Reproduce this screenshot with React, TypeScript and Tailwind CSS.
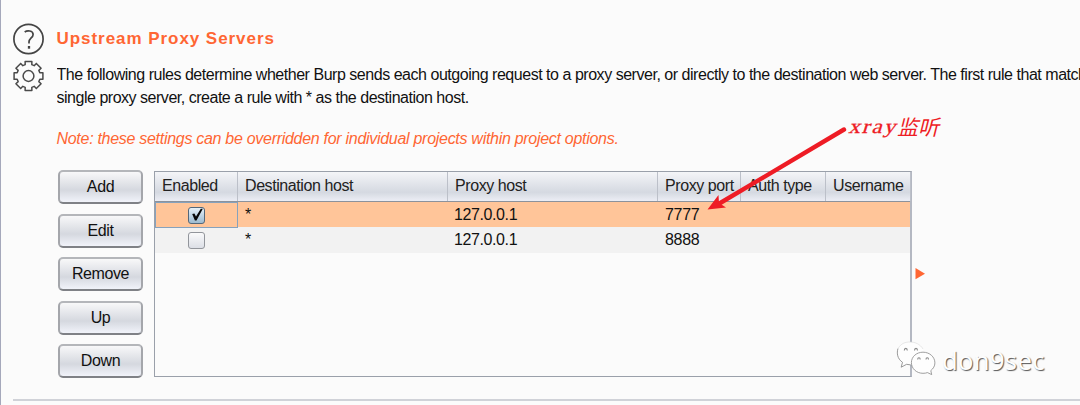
import React from "react";

const buttons = ["Add", "Edit", "Remove", "Up", "Down"];
const columns = ["Enabled", "Destination host", "Proxy host", "Proxy port", "Auth type", "Username"];
const rows = [
  { enabled: true, host: "*", proxy: "127.0.0.1", port: "7777" },
  { enabled: false, host: "*", proxy: "127.0.0.1", port: "8888" },
];
const grid = "grid grid-cols-[83px_210px_210px_83px_85px_85px]";

function HelpIcon() {
  return (
    <svg width="32" height="32" viewBox="0 0 32 32" fill="none" stroke="#444" className="block">
      <circle cx="15.500" cy="16" r="14.600" strokeWidth="1.700" />
      <path d="M11.700 9c2.400-1.800 8.400-1.700 8.400 2.400 0 3.400-4.100 3.800-4.100 7.700v1.400" strokeWidth="1.700" />
      <path d="M16 23v2.700" strokeWidth="2.300" />
    </svg>
  );
}

const teeth = Array.from({ length: 8 }, (_, i) => {
  const base = (i * Math.PI) / 4 - Math.PI / 2;
  return [
    [-0.285, 11.8],
    [-0.23, 14.8],
    [0.23, 14.8],
    [0.285, 11.8],
  ]
    .map(([a, r]) => `${(15.5 + r * Math.cos(base + a)).toFixed(2)},${(16 + r * Math.sin(base + a)).toFixed(2)}`)
    .join(" ");
}).join(" ");

function GearIcon() {
  return (
    <svg width="32" height="32" viewBox="0 0 32 32" fill="none" stroke="#4a4a4a" className="block">
      <polygon points={teeth} strokeWidth="1.500" strokeLinejoin="round" />
      <circle cx="15.500" cy="16" r="5.400" strokeWidth="1.500" />
    </svg>
  );
}

function CheckBox({ checked }: { checked: boolean }) {
  return (
    <span
      className={
        "block h-[17px] w-[17px] rounded-[3px] border " +
        (checked
          ? "border-[#53677a] bg-linear-to-b from-[#e6f0f8] to-[#9dbbd0]"
          : "border-[#92959b] bg-linear-to-b from-[#fafafb] to-[#dcdfe6]")
      }
    >
      {checked && (
        <svg width="15" height="15" viewBox="0 0 15 15" className="block overflow-visible" fill="#080808">
          <path d="M3.200 6 5.400 5.500 7 8.400 11.800.8 13.800.8 7.500 12.600 5.900 12.600Z" />
        </svg>
      )}
    </span>
  );
}

function Watermark() {
  return (
    <div className="absolute left-[895px] top-[340px] flex items-start">
      <svg width="42" height="38" viewBox="0 0 42 38" fill="#fefefe" className="block">
        <path d="M15 2C8 2 2.200 6.800 2.200 13.200c0 4 2.200 7 5.300 9.100l-1.300 4.900 5.400-2.900c6 1.500 17.200-1 17.200-11.100C28.800 6.800 22.500 2 15 2Z" />
        <path d="M3 8.500C1.600 13 2.200 18.700 7.500 22.300l-1.300 4.900 5.400-2.900 4 .6" fill="none" stroke="#808080" strokeWidth=".8" />
        <path d="M3 8.500C6 3.500 10 2 15 2s10 2 13 7" fill="none" stroke="#d8d8d8" strokeWidth=".6" />
        <path
          d="M28 12.200c-6.500 0-11.600 4.500-11.600 10.400 0 5.900 5 10.700 11.600 10.700 1.600 0 3.100-.2 4.500-.7l4.200 2-.9-4c2.500-2 4.100-4.600 4.100-7.700 0-5.900-5.200-10.700-11.900-10.700Z"
          stroke="#888"
          strokeWidth=".8"
        />
        <g fill="none" strokeWidth="1.100" stroke="#888">
          <path d="M9.300 10.500c0-2.800 3-2.800 3 0M19.500 10.500c0-2.800 3-2.800 3 0" />
          <path d="M22.700 19.500c0-2.400 2.500-2.400 2.500 0M31 19.500c0-2.400 2.500-2.400 2.500 0" />
        </g>
      </svg>
      <span className="ml-[5px] mt-[3px] whitespace-nowrap font-['Noto_Sans',sans-serif] text-[25.500px] leading-[34px] tracking-[0.350px] text-[#fdfdfd] [text-shadow:1px_1px_1px_#555]">
        don9sec
      </span>
    </div>
  );
}

export default function App() {
  return (
    <div className="relative flex h-[405px] w-[1080px] flex-col overflow-hidden bg-[#fbfbfb] font-['Liberation_Sans',Arial,sans-serif] text-[16px] tracking-[-0.4px] text-[#111] shadow-[inset_1px_0_0_#a5a8bb]">
      <div className="flex pl-[13px] pt-[23px]">
        <div className="flex w-[32px] shrink-0 flex-col gap-[5px]">
          <HelpIcon />
          <GearIcon />
        </div>
        <div className="ml-[11.500px] whitespace-nowrap">
          <h1 className="mt-[6px] text-[17px] font-bold leading-[20px] tracking-[0.95px] text-[#ff6633]">
            <span>Upstream Proxy Servers</span>
          </h1>
          <p className="mt-[14px] w-[1024px] overflow-hidden leading-[23px]">
            <span className="tracking-[-0.47px]">
              The following rules determine whether Burp sends each outgoing request to a proxy server, or directly to the destination web server. The first rule that match
            </span>
            <br />
            <span className="tracking-[-0.48px]">single proxy server, create a rule with * as the destination host.</span>
          </p>
          <p className="mt-[18px] italic leading-[23px] tracking-[-0.29px] text-[#ff6633]">
            <span>Note: these settings can be overridden for individual projects within project options.</span>
          </p>
        </div>
      </div>

      <div className="mt-[20px] flex pl-[58px]">
        <div className="flex w-[85px] flex-col gap-[9.500px]">
          {buttons.map((label) => (
            <button
              key={label}
              className="h-[34px] rounded-[5px] border-2 border-[#a4a6ab] border-b-[#7f8186] border-t-[#b4b6ba] bg-linear-to-b from-[#f8f8f9] via-[#d5d8df] via-60% to-[#f1f3fa] leading-[30px]"
            >
              {label}
            </button>
          ))}
        </div>
        <div className="ml-[11px] mt-px h-[206px] w-[758px] border border-r-2 border-[#9aa0aa] border-r-[#b4b8c2]">
          <div className={grid + " h-[30px] border-b border-[#8c929b] bg-linear-to-b from-[#f4f5f8] via-[#d5d9e1] via-70% to-[#eceef5]"}>
            {columns.map((c) => (
              <div key={c} className="whitespace-nowrap border-r border-[#bcc0c9] pl-[7px] leading-[28px] tracking-[-0.42px] text-[#222]">
                <span>{c}</span>
              </div>
            ))}
          </div>
          {rows.map((r) => (
            <div key={r.port} className={grid + (r.enabled ? " h-[25px] bg-[#ffc599]" : " h-[26px] bg-[#f2f2f2]")}>
              <div className={"flex items-center justify-center " + (r.enabled ? "border border-[#86a2bd]" : "")}>
                <CheckBox checked={r.enabled} />
              </div>
              <div className="pl-[7px] leading-[26px]">{r.host}</div>
              <div className="pl-[6px] leading-[25px] tracking-[-0.4px]"><span>{r.proxy}</span></div>
              <div className="pl-[7px] leading-[25px] tracking-[-0.3px]"><span>{r.port}</span></div>
            </div>
          ))}
        </div>
      </div>
      <div className="ml-[13px] mt-[21px] h-[2px] bg-[#d0d2d8]" />

      <svg className="absolute left-[915px] top-[267px]" width="11" height="13" viewBox="0 0 11 13">
        <path d="M0.500 1 10 6.700 0.500 12.300Z" fill="#ff6633" />
      </svg>
      <svg className="absolute left-[700px] top-[120px]" width="156" height="100" viewBox="700 120 156 100">
        <path d="M844 129.500 716 205.500" stroke="#ee1c25" strokeWidth="4.400" strokeLinecap="round" />
        <path d="M707.500 209.500 718.500 195 719 203 726 207.500Z" fill="#ee1c25" />
      </svg>
      <div className="absolute left-[846px] top-[112px] flex whitespace-nowrap text-[#ee1c25]">
        <span className="w-[51px] origin-bottom-left -skew-x-[15deg] scale-x-[1.15] font-['Liberation_Serif',serif] text-[20px] leading-[28px] tracking-[1.700px] [-webkit-text-stroke:0.3px_#ee1c25]">
          xray
        </span>
        <span className="font-['Noto_Sans_CJK_SC',sans-serif] text-[21px] italic leading-[28px] tracking-normal">监听</span>
      </div>
      <Watermark />
    </div>
  );
}
